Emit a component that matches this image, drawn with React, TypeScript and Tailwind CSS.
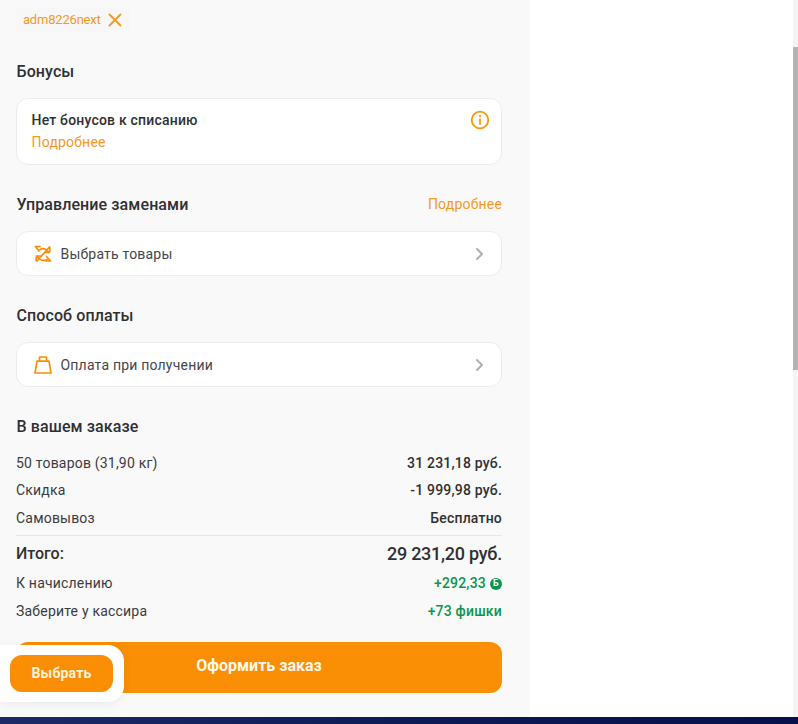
import React from "react";

const Chevron = () => (
  <svg width="20" height="20" viewBox="0 0 20 20" fill="none" stroke="#b0b0b0" strokeWidth="2" strokeLinecap="round" strokeLinejoin="round">
    <path d="M8 5 13 10l-5 5" />
  </svg>
);

const SwapIcon = () => (
  <svg width="18" height="18" viewBox="0 0 18 18" fill="none" stroke="#fa8f05" strokeWidth="1.700" strokeLinecap="round" strokeLinejoin="round">
    <path d="M1.500 1.500H6M1.500 1.500 5 6" />
    <path d="M6 4.500C9 2.500 12.500 3.800 14.500 7.500" />
    <path d="M11 7.500H15.500L16 3" />
    <path d="M15.500 2 3 16" />
    <path d="M3.200 11.500C5 15 9.500 16.500 13 14.500" />
    <path d="M2 15.500 2.500 11H6.500" />
    <path d="M12.500 11.500 16.500 16H12" />
  </svg>
);

const BagIcon = () => (
  <svg width="18" height="18" viewBox="0 0 18 18" fill="none" stroke="#fa8f05" strokeWidth="1.700" strokeLinejoin="round">
    <path d="M3 5.200H15L17 17H1Z" />
    <path d="M5.500 5V1.500Q5.500 1 6 1H12Q12.500 1 12.500 1.500V5" />
  </svg>
);

const Row = ({ label, value, valueClass = "text-[#2f3033]" }: { label: string; value: React.ReactNode; valueClass?: string }) => (
  <div className="flex h-[27.500px] items-center justify-between pt-[1px]">
    <span className="text-[14px] tracking-[0.2px] text-[#3a3c40]">{label}</span>
    <span className={`flex items-center text-[14px] font-medium tracking-[0.2px] ${valueClass}`}>{value}</span>
  </div>
);

const Heading = ({ children }: { children: React.ReactNode }) => (
  <h2 className="mt-[27px] pl-[0.5px] pt-[2px] text-[16px] font-medium leading-[22px] tracking-[0.1px] text-[#2f3033]">{children}</h2>
);

const SelectCard = ({ icon, label }: { icon: React.ReactNode; label: string }) => (
  <div className="mt-[15px] flex h-[45px] items-center rounded-xl border border-[#ececec] bg-white pl-[17px] pr-[12px]">
    <span className="flex w-[18px] justify-center">{icon}</span>
    <span className="ml-[8.500px] flex-1 pt-[2px] text-[14px] tracking-[0.2px] text-[#44464b]">{label}</span>
    <Chevron />
  </div>
);

export default function App() {
  return (
    <div className="relative flex h-[724px] w-[798px] flex-col overflow-hidden bg-white font-['Roboto',sans-serif]">
      <div className="flex h-[717px] w-full">
        <main className="h-full w-[530px] bg-[#f9f9fa] pl-[16px] pr-[28px] pt-[8px]">
          <div className="flex h-[24px] w-fit items-center rounded-md bg-[#f7f7f8] pl-[7px] pr-[8px]">
            <span className="text-[13px] tracking-[-0.2px] text-[#f5981f]">adm8226next</span>
            <svg className="ml-[7.500px]" width="14" height="14" viewBox="0 0 14 14" fill="none" stroke="#f59a23" strokeWidth="1.900" strokeLinecap="round">
              <path d="M1.500 1.500 12.500 12.500M12.500 1.500 1.500 12.500" />
            </svg>
          </div>

          <h2 className="mt-[27px] pl-[0.5px] pt-[2px] text-[16px] font-medium leading-[22px] tracking-[0.1px] text-[#2f3033]">Бонусы</h2>

          <div className="mt-[15px] flex h-[67px] justify-between rounded-xl border border-[#ececec] bg-white pb-[9px] pl-[14.500px] pr-[11px] pt-[11px]">
            <div>
              <div className="text-[14px] font-medium leading-[20px] tracking-[0.2px] text-[#2f3033]">Нет бонусов к списанию</div>
              <div className="mt-[2px] text-[14px] leading-[20px] tracking-[0.2px] text-[#f5981f]">Подробнее</div>
            </div>
            <svg width="20" height="20" viewBox="0 0 20 20" fill="none" stroke="#f59a10" strokeWidth="1.800" strokeLinecap="round">
              <circle cx="10" cy="10" r="8.300" />
              <path d="M10 9.500V14" />
              <path d="M10 6.200V6.300" strokeWidth="2.200" />
            </svg>
          </div>

          <div className="mt-[27px] flex h-[24px] items-center justify-between pl-[0.5px] pt-[2px]">
            <h2 className="text-[16px] font-medium tracking-[0.1px] text-[#2f3033]">Управление заменами</h2>
            <span className="pb-[1px] text-[14px] tracking-[0.2px] text-[#f5981f]">Подробнее</span>
          </div>

          <SelectCard icon={<SwapIcon />} label="Выбрать товары" />

          <Heading>Способ оплаты</Heading>

          <SelectCard icon={<BagIcon />} label="Оплата при получении" />

          <Heading>В вашем заказе</Heading>

          <div className="mt-[11px] border-b border-[#e6e6e6] pb-[3px]">
            <Row label="50 товаров (31,90 кг)" value="31 231,18 руб." />
            <Row label="Скидка" value="-1 999,98 руб." />
            <Row label="Самовывоз" value="Бесплатно" />
          </div>

          <div className="flex h-[34px] items-center justify-between pt-[2px]">
            <span className="text-[16px] font-medium text-[#2f3033]">Итого:</span>
            <span className="text-[18px] font-medium tracking-[-0.25px] text-[#2f3033]">29 231,20 руб.</span>
          </div>
          <Row
            label="К начислению"
            valueClass="text-[#0b964c]"
            value={
              <>
                +292,33
                <span className="ml-[4px] flex h-[12px] w-[12px] items-center justify-center rounded-full bg-[#0b964c] text-[9px] font-bold leading-none text-white">Б</span>
              </>
            }
          />
          <Row label="Заберите у кассира" value="+73 фишки" valueClass="text-[#0b964c]" />

          <button className="mt-[17px] flex h-[51px] w-full items-center justify-center rounded-xl bg-[#fa8f05] pb-[3px] text-[16px] font-bold text-[#fff8ee]">
            Оформить заказ
          </button>
        </main>
        <div className="flex-1 bg-white" />
        <div className="flex w-[5px] flex-col bg-[#f4f4f4] pt-[47px] pb-[347px]">
          <div className="flex-1 bg-[#b4b4b4]" />
        </div>
      </div>
      <footer className="h-[7px] bg-gradient-to-r from-[#1c2a68] via-[#0c1a56] to-[#07104a]" />

      <div className="absolute left-0 top-[645px] rounded-r-2xl bg-white py-[10px] pl-[10px] pr-[11px] shadow-[0_2px_10px_rgba(0,0,0,0.06)]">
        <button className="h-[37px] w-[103px] rounded-xl bg-[#fa8f05] text-[14px] font-bold tracking-[0.2px] text-[#fff3df]">Выбрать</button>
      </div>
    </div>
  );
}
